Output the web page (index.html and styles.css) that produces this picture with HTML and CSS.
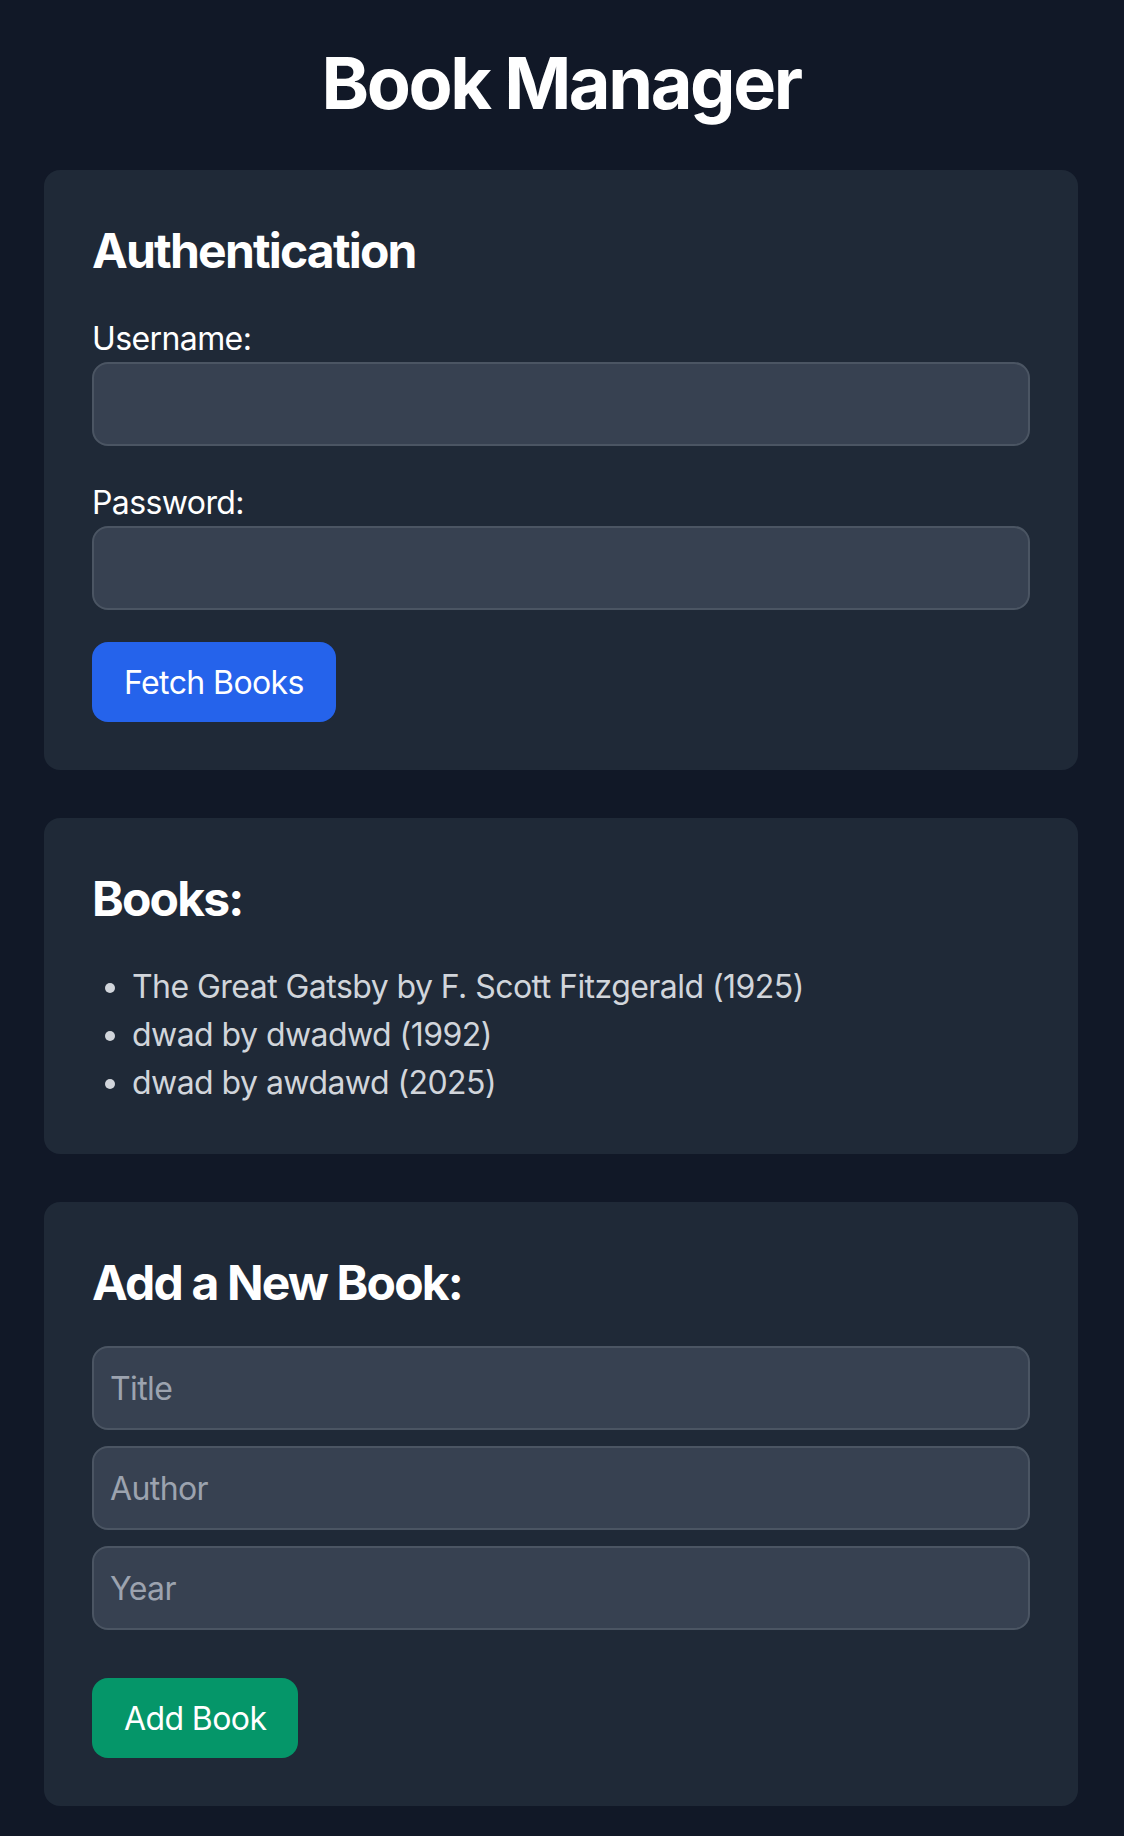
FILE: index.html
```html
<!DOCTYPE html>
<html lang="en">
<head>
<meta charset="utf-8">
<title>Book Manager</title>
<link rel="stylesheet" href="styles.css">
</head>
<body>
<div class="page">
  <h1 class="title">Book Manager</h1>

  <section class="card">
    <h2 class="card-title">Authentication</h2>
    <label class="label" for="username">Username:</label>
    <input class="field field-gap" id="username" type="text">
    <label class="label" for="password">Password:</label>
    <input class="field field-gap" id="password" type="password">
    <button class="btn btn-blue">Fetch Books</button>
  </section>

  <section class="card">
    <h2 class="card-title">Books:</h2>
    <ul class="book-list">
      <li>The Great Gatsby by F. Scott Fitzgerald (1925)</li>
      <li>dwad by dwadwd (1992)</li>
      <li>dwad by awdawd (2025)</li>
    </ul>
  </section>

  <section class="card">
    <h2 class="card-title">Add a New Book:</h2>
    <input class="field field-small-gap" type="text" placeholder="Title">
    <input class="field field-small-gap" type="text" placeholder="Author">
    <input class="field field-small-gap" type="number" placeholder="Year">
    <button class="btn btn-green btn-spaced">Add Book</button>
  </section>
</div>
</body>
</html>
```

FILE: styles.css
```css
* {
  box-sizing: border-box;
}

html, body {
  margin: 0;
  padding: 0;
  background: #111827;
}

body {
  font-family: Inter, "Noto Sans", "Liberation Sans", sans-serif;
  color: #ffffff;
}

.page {
  padding: 43px 46px 30px 44px;
}

.title {
  margin: 0 0 47px 0;
  font-size: 72px;
  line-height: 80px;
  font-weight: 700;
  text-align: center;
  letter-spacing: -2.4px;
}

.card {
  background: #1f2937;
  border-radius: 16px;
  padding: 48px;
  margin-bottom: 48px;
  display: flex;
  flex-direction: column;
  align-items: flex-start;
}

.card:last-child {
  margin-bottom: 0;
}

.card-title {
  margin: 0 0 32px 0;
  padding-top: 1px;
  height: 64px;
  font-size: 48px;
  line-height: 64px;
  font-weight: 700;
  letter-spacing: -1.8px;
}

.label {
  display: block;
  font-size: 32px;
  line-height: 48px;
  padding-top: 1px;
  height: 48px;
  color: #ffffff;
  letter-spacing: -0.6px;
}

.field {
  display: block;
  width: 100%;
  height: 84px;
  padding: 16px;
  font-family: inherit;
  font-size: 32px;
  line-height: 48px;
  color: #ffffff;
  background: #374151;
  border: 2px solid #4b5563;
  border-radius: 16px;
  outline: none;
  letter-spacing: -0.6px;
  appearance: textfield;
  -moz-appearance: textfield;
}

.field::-webkit-outer-spin-button,
.field::-webkit-inner-spin-button {
  -webkit-appearance: none;
  margin: 0;
}

.field::placeholder {
  color: #9ca3af;
}

.field-gap {
  margin-bottom: 32px;
}

.field-small-gap {
  margin-bottom: 16px;
}

.btn {
  font-family: inherit;
  font-size: 32px;
  line-height: 48px;
  padding: 17px 32px 15px;
  border: none;
  border-radius: 16px;
  color: #ffffff;
  cursor: pointer;
  letter-spacing: -0.6px;
}

.btn-blue {
  background: #2563eb;
}

.btn-green {
  background: #059669;
}

.btn-spaced {
  margin-top: 32px;
}

.book-list {
  margin: 0;
  padding-left: 40px;
  font-size: 32px;
  line-height: 48px;
  color: #d1d5db;
  list-style: disc;
  letter-spacing: -0.55px;
}

.book-list li {
  padding-top: 1px;
  height: 48px;
}
```
